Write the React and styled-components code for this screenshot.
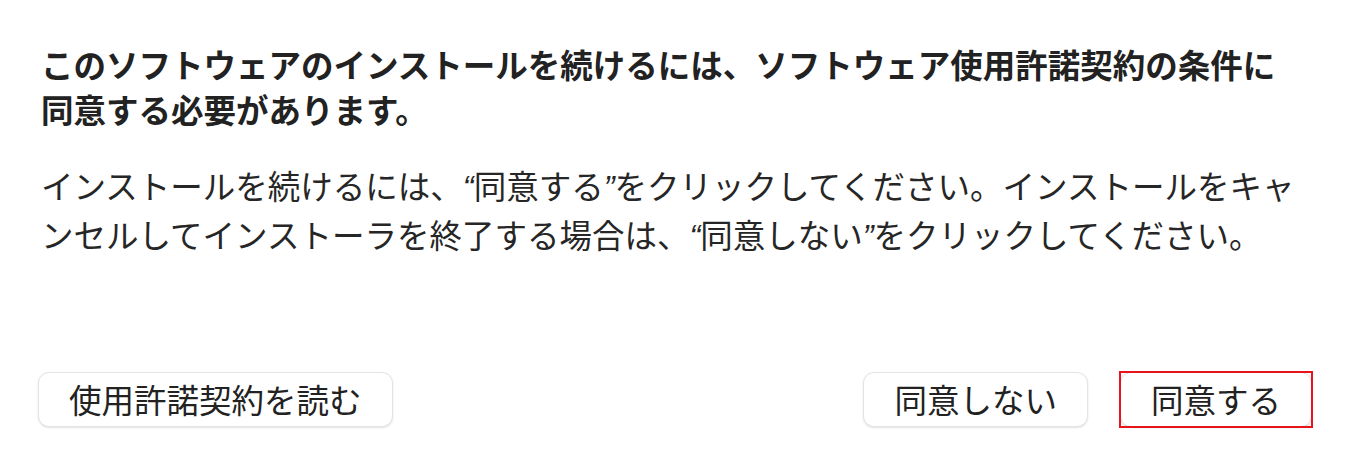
import styled, { createGlobalStyle } from "styled-components";

const GlobalStyle = createGlobalStyle`
    html, body {
        margin: 0;
        padding: 0;
        background: #ffffff;
    }
    body {
        font-family: "Noto Sans CJK JP", "Noto Sans", sans-serif;
        color: #222222;
    }
`;

export default function App() {
    return (
        <>
            <GlobalStyle />
            <Dialog>
                <Content>
                    <Title>
                        このソフトウェアのインストールを続けるには、ソフトウェア使用許諾契約の条件に<br />
                        同意する必要があります。
                    </Title>
                    <Message>
                        インストールを続けるには、<Quote>“</Quote>同意する<Quote>”</Quote>をクリックしてください。インストールをキャ<br />
                        ンセルしてインストーラを終了する場合は、<Quote>“</Quote>同意しない<Quote>”</Quote>をクリックしてください。
                    </Message>
                </Content>
                <Footer>
                    <Button>使用許諾契約を読む</Button>
                    <Actions>
                        <Button>同意しない</Button>
                        <Button $highlighted>同意する</Button>
                    </Actions>
                </Footer>
            </Dialog>
        </>
    );
}

const Dialog = styled.div`
    height: 471px;
    box-sizing: border-box;
    display: flex;
    flex-direction: column;
    justify-content: space-between;
    padding: 41px 42px 44px 38px;
`;
const Content = styled.div`
    display: flex;
    flex-direction: column;
    gap: 31px;
    padding-left: 3px;
`;
const Title = styled.h1`
    margin: 0;
    font-size: 32.5px;
    line-height: 45px;
    font-weight: 700;
    color: #222222;
    white-space: nowrap;
`;
const Message = styled.p`
    margin: 0;
    font-size: 32.5px;
    line-height: 45px;
    font-weight: 400;
    color: #262626;
    white-space: nowrap;
`;
const Quote = styled.span`
    font-family: "Liberation Sans", sans-serif;
    font-style: italic;
`;
const Footer = styled.div`
    display: flex;
    justify-content: space-between;
    align-items: center;
`;
const Actions = styled.div`
    display: flex;
    gap: 32px;
`;
const Button = styled.button`
    position: relative;
    height: 55px;
    padding: 0 30px;
    box-sizing: border-box;
    background: #ffffff;
    border: 1px solid #e4e4e4;
    border-radius: 11px;
    box-shadow: 0 1px 2px rgba(0, 0, 0, 0.12);
    font-family: "Noto Sans CJK JP", sans-serif;
    font-size: 32.5px;
    line-height: 1;
    color: #222222;

    &::after {
        content: "";
        display: ${(p) => (p.$highlighted ? "block" : "none")};
        position: absolute;
        inset: -2px;
        border: 2px solid #e8141b;
    }
`;
